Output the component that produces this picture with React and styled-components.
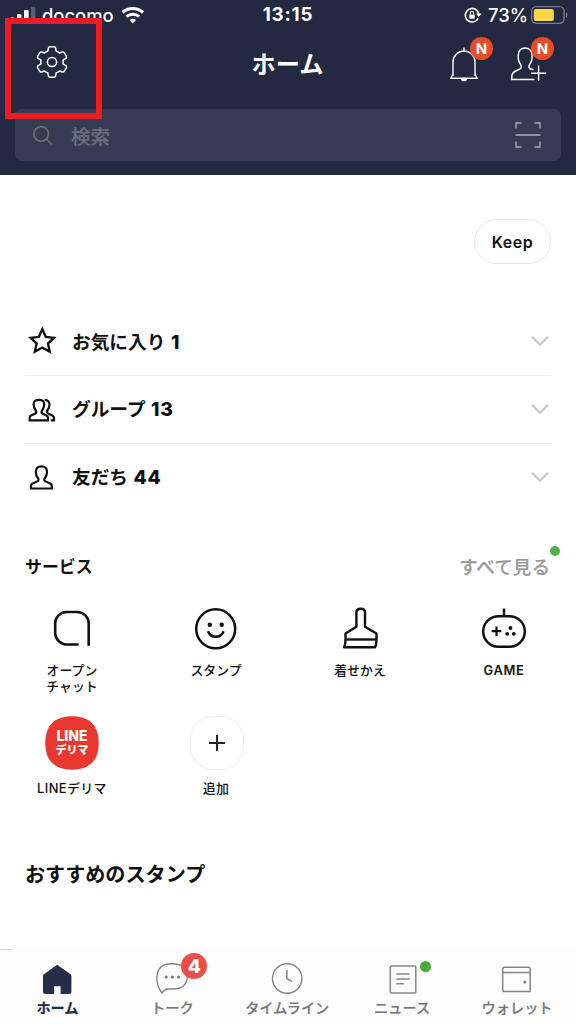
import React from "react";
import styled, { createGlobalStyle } from "styled-components";

const rows = [
  { label: "お気に入り", count: 1, icon: <StarIcon /> },
  { label: "グループ", count: 13, icon: <GroupIcon /> },
  { label: "友だち", count: 44, icon: <FriendIcon /> },
];

const services = [
  { label: "オープン\nチャット", icon: <OpenChatIcon /> },
  { label: "スタンプ", icon: <SmileIcon /> },
  { label: "着せかえ", icon: <BrushIcon /> },
  { label: "GAME", icon: <GameIcon />, latin: true },
  { label: "LINEデリマ", icon: <DelimaIcon />, tile: true },
  { label: "追加", icon: <AddIcon />, tile: true },
];

const tabs = [
  { label: "ホーム", icon: <HomeIcon />, active: true },
  { label: "トーク", icon: <TalkIcon />, badge: 4 },
  { label: "タイムライン", icon: <ClockIcon /> },
  { label: "ニュース", icon: <NewsIcon />, dot: true },
  { label: "ウォレット", icon: <WalletIcon /> },
];

export default function App() {
  return (
    <>
      <GlobalStyle />
      <Screen>
        <Header>
          <StatusBar>
            <StatusSide>
              <SignalIcon />
              <Carrier>docomo</Carrier>
              <WifiIcon />
            </StatusSide>
            <Clock>13:15</Clock>
            <StatusSide $end>
              <LockIcon />
              <Percent>73%</Percent>
              <BatteryIcon />
            </StatusSide>
          </StatusBar>
          <TitleBar>
            <GearIcon />
            <Title>ホーム</Title>
            <Actions>
              <Action>
                <BellIcon />
                <NewBadge>N</NewBadge>
              </Action>
              <Action>
                <AddFriendIcon />
                <NewBadge>N</NewBadge>
              </Action>
            </Actions>
          </TitleBar>
          <Search>
            <SearchIcon />
            <Placeholder>検索</Placeholder>
            <ScanIcon />
          </Search>
          <Highlight />
        </Header>

        <Content>
          <KeepRow>
            <Keep>Keep</Keep>
          </KeepRow>

          <List>
            {rows.map((row) => (
              <Row key={row.label}>
                <RowIcon>{row.icon}</RowIcon>
                <RowLabel>
                  {row.label} <Count>{row.count}</Count>
                </RowLabel>
                <ChevronIcon />
              </Row>
            ))}
          </List>

          <SectionHead>
            <SectionTitle>サービス</SectionTitle>
            <SeeAll>
              すべて見る
              <SeeAllDot />
            </SeeAll>
          </SectionHead>

          <Services>
            {services.map((s) => (
              <Service key={s.label}>
                <ServiceIcon>{s.icon}</ServiceIcon>
                <ServiceLabel $latin={s.latin} $tile={s.tile}>
                  {s.label}
                </ServiceLabel>
              </Service>
            ))}
          </Services>

          <Recommended>おすすめのスタンプ</Recommended>
          <Sliver />
        </Content>

        <TabBar>
          {tabs.map((tab) => (
            <Tab key={tab.label} $active={tab.active}>
              <TabIcon>
                {tab.icon}
                {tab.badge && <TabBadge>{tab.badge}</TabBadge>}
                {tab.dot && <TabDot />}
              </TabIcon>
              <TabLabel>{tab.label}</TabLabel>
            </Tab>
          ))}
        </TabBar>
      </Screen>
    </>
  );
}

/* status bar icons */

function SignalIcon() {
  return (
    <svg width="26" height="18" viewBox="0 0 26 18" fill="#fff">
      <rect x="0" y="11.5" width="4.4" height="5" rx="1" />
      <rect x="7" y="8.3" width="4.4" height="8.2" rx="1" />
      <rect x="14" y="4" width="4.6" height="12.5" rx="1" />
      <rect x="21" y="1" width="4.4" height="15.5" rx="1" opacity="0.25" />
    </svg>
  );
}

function WifiIcon() {
  return (
    <svg width="24" height="18" viewBox="0 0 24 18" fill="none" stroke="#fff">
      <path d="M1.6 6.5a15 15 0 0 1 20.4 0" strokeWidth="3.2" />
      <path d="M5.5 10.6a9.4 9.4 0 0 1 12.6 0" strokeWidth="3" />
      <path d="M11.8 17.5l-3.3-3.4a5 5 0 0 1 6.6 0z" fill="#fff" stroke="none" />
    </svg>
  );
}

function LockIcon() {
  return (
    <svg width="18" height="17" viewBox="0 0 18 17" fill="none" stroke="#fff">
      <path d="M14.2 11.3A6.8 6.8 0 1 1 12.6 3.1" strokeWidth="1.6" />
      <path d="M12.2 2.8a6.8 6.8 0 0 1 2.6 4" strokeWidth="1.6" />
      <path d="M12 6.5h5.6l-2.8 3.6z" fill="#fff" stroke="none" />
      <rect x="5.3" y="7.4" width="5.4" height="4.3" rx=".6" fill="#fff" stroke="none" />
      <path d="M6.4 7.6V6a1.6 1.6 0 0 1 3.2 0v1.6" strokeWidth="1.1" />
    </svg>
  );
}

function BatteryIcon() {
  return (
    <svg width="37" height="18" viewBox="0 0 37 18" fill="none">
      <rect x=".7" y=".7" width="32.4" height="16.6" rx="4.5" stroke="#7a7d8d" strokeWidth="1.3" />
      <rect x="2.8" y="2.9" width="20" height="12.2" rx="2.2" fill="#f9d648" />
      <path d="M35 6c1.8.7 1.8 5.3 0 6z" fill="#7a7d8d" />
    </svg>
  );
}

/* header icons */

function GearIcon() {
  return (
    <svg width="32" height="34" viewBox="-16 -17 32 34" fill="none" stroke="#fff" strokeWidth="1.5" strokeLinejoin="round">
      <path d="M-3.7 -13.5Q-3.5 -15.3 -2 -15.3H2Q3.5 -15.3 3.7 -13.5L4.1 -11Q6 -10.3 7.6 -9L10.2 -10Q11.5 -10.4 12.3 -9.2L14.3 -5.8Q14.9 -4.5 13.9 -3.6L11 -1.8Q11.4 0 11 1.8L13.9 3.6Q14.9 4.5 14.3 5.8L12.3 9.2Q11.5 10.4 10.2 10L7.6 9Q6 10.3 4.1 11L3.7 13.5Q3.5 15.3 2 15.3H-2Q-3.5 15.3 -3.7 13.5L-4.1 11Q-6 10.3 -7.6 9L-10.2 10Q-11.5 10.4 -12.3 9.2L-14.3 5.8Q-14.9 4.5 -13.9 3.6L-11 1.8Q-11.4 0 -11 -1.8L-13.9 -3.6Q-14.9 -4.5 -14.3 -5.8L-12.3 -9.2Q-11.5 -10.4 -10.2 -10L-7.6 -9Q-6 -10.3 -4.1 -11Z" />
      <circle r="4.6" />
    </svg>
  );
}

function BellIcon() {
  return (
    <svg width="36" height="36" viewBox="0 0 36 36" fill="none" stroke="#fff" strokeWidth="1.4">
      <path d="M14 .5v4M3 29V15a11 11 0 0 1 22 0v14M3 27L.8 31.2H27.2L25 27" />
      <path d="M11 31.7h6a3 2.6 0 0 1-6 0z" fill="#fff" stroke="none" />
    </svg>
  );
}

function AddFriendIcon() {
  return (
    <svg width="36" height="36" viewBox="0 0 36 36" fill="none" stroke="#fff" strokeWidth="1.4">
      <path d="M23.5 32.5H.8V29Q1.2 25.5 4.7 24L9.2 21.8Q11.2 20.4 9.8 17.9C7.5 14.8 6.9 12 7.3 8C7.7 3 10.2 1 14.1 1S20.6 3 21.1 8C21.4 12 20.7 14.8 18.4 17.9Q17.1 20.4 19.2 21.8L22.5 22.7" />
      <path d="M27.6 18.5v15.5M20.2 26.2h15" />
    </svg>
  );
}

function SearchIcon() {
  return (
    <svg width="20" height="20" viewBox="0 0 20 20" fill="none" stroke="#6b6f82" strokeWidth="1.6">
      <circle cx="8.2" cy="8.9" r="7.3" />
      <path d="M13.3 14L19 19.5" />
    </svg>
  );
}

function ScanIcon() {
  return (
    <svg width="26" height="26" viewBox="0 0 26 26" fill="none" stroke="#8b8e9c" strokeWidth="1.9">
      <path d="M1 6.5V1h5.5M19.5 1H25v5.5M25 19.5V25h-5.5M6.5 25H1v-5.5M.5 13h25" />
    </svg>
  );
}

/* list icons */

function StarIcon() {
  return (
    <svg width="30" height="30" viewBox="0 0 30 30" fill="none" stroke="#111" strokeWidth="2.4">
      <path d="M15.3 3.2L18.8 10.9L27 11.8L21 17.4L22.7 25.6L15.3 21.5L7.9 25.6L9.6 17.4L3.6 11.8L11.8 10.9Z" />
    </svg>
  );
}

function GroupIcon() {
  return (
    <svg width="30" height="30" viewBox="0 0 30 30" fill="none" stroke="#111" strokeWidth="2.2">
      <path d="M2.7 26.3H20.9V23.7Q20.9 22.2 19.5 21.5L15.4 19.5Q13.9 18.5 14.9 16.7Q17.2 13.8 17.2 10.5Q17.2 5.8 11.9 5.8T6.6 10.5Q6.6 13.8 8.9 16.7Q9.9 18.5 8.4 19.5L4.1 21.5Q2.7 22.2 2.7 23.7Z" />
      <path d="M17.7 5.8Q22.5 6.1 22.5 10.5Q22.5 13.8 20.2 16.7Q19.4 18.5 21 19.5L25.2 21.6Q27 22.5 27 24V26.3H23.7" />
    </svg>
  );
}

function FriendIcon() {
  return (
    <svg width="30" height="30" viewBox="0 0 30 30" fill="none" stroke="#111" strokeWidth="2.2">
      <path d="M4 26.5H24.8V23.9Q24.8 22.3 23.3 21.6L18.5 19.4Q16.5 18.2 17.8 16.2Q20 13.4 20 9.9Q20 4.3 14.4 4.3T8.8 9.9Q8.8 13.4 11 16.2Q12.3 18.2 10.3 19.4L5.5 21.6Q4 22.3 4 23.9Z" />
    </svg>
  );
}

function ChevronIcon() {
  return (
    <svg width="20" height="12" viewBox="0 0 20 12" fill="none" stroke="#c6c6c6" strokeWidth="2.2">
      <path d="M2 1.7l8 8 8-8" />
    </svg>
  );
}

/* service icons */

function OpenChatIcon() {
  return (
    <svg width="44" height="44" viewBox="0 0 44 44" fill="none" stroke="#111" strokeWidth="2.6">
      <path d="M28.7 37.5H17A12 12 0 0 1 5.2 27V16.5A11.5 11.5 0 0 1 16.5 5H27.3A11.5 11.5 0 0 1 38.7 16.5V38.8" />
    </svg>
  );
}

function SmileIcon() {
  return (
    <svg width="44" height="44" viewBox="0 0 44 44" fill="none" stroke="#111" strokeWidth="2.5">
      <circle cx="21.7" cy="21.8" r="19.5" />
      <circle cx="15.8" cy="17.8" r="2.2" fill="#111" stroke="none" />
      <circle cx="27.7" cy="17.8" r="2.2" fill="#111" stroke="none" />
      <path d="M14 24.3a8.3 8.3 0 0 0 15.6 0" />
    </svg>
  );
}

function BrushIcon() {
  return (
    <svg width="44" height="44" viewBox="0 0 44 44" fill="none" stroke="#111" strokeWidth="2.4" strokeLinejoin="round">
      <path d="M6 40.3H37Q38.5 38 38.5 33V26.5L27 19.7V5.5Q27 1.8 22.7 1.8T18.4 5.5V19.7L7.5 26.5V33Q7.5 38 6 40.3Z" />
      <path d="M7.5 32.5h31" />
    </svg>
  );
}

function GameIcon() {
  return (
    <svg width="46" height="44" viewBox="0 0 46 44" fill="none" stroke="#111" strokeWidth="2.5">
      <path d="M23 1.5v8" />
      <rect x="2.2" y="9.2" width="41.6" height="30.6" rx="15.3" />
      <path d="M15.5 19.5v9.5M10.7 24.2h9.6" strokeWidth="2.2" />
      <g fill="#111" stroke="none">
        <circle cx="29.5" cy="21" r="1.9" />
        <circle cx="26.2" cy="26.8" r="1.9" />
        <circle cx="32.8" cy="26.8" r="1.9" />
      </g>
    </svg>
  );
}

function DelimaIcon() {
  return (
    <Tile>
      <Squircle fill="#e8382f" />
      <TileText>
        <TileLine>LINE</TileLine>
        <TileLine $kana>デリマ</TileLine>
      </TileText>
    </Tile>
  );
}

function AddIcon() {
  return (
    <Tile $nudge>
      <Squircle fill="#fff" stroke="#ededed" />
      <TileText>
        <svg width="18" height="18" viewBox="0 0 18 18" stroke="#222" strokeWidth="2.1">
          <path d="M9 1v16M1 9h16" />
        </svg>
      </TileText>
    </Tile>
  );
}

function Squircle(props) {
  return (
    <svg width="54" height="54" viewBox="0 0 54 54" {...props}>
      <path d="M27 .3C44.5 .3 53.7 9.5 53.7 27S44.5 53.7 27 53.7S.3 44.5 .3 27S9.5 .3 27 .3Z" />
    </svg>
  );
}

/* tab icons */

function HomeIcon() {
  return (
    <svg width="34" height="34" viewBox="0 0 34 34" fill="#262d49">
      <path d="M17.2 1.8L30.5 11.2Q31.4 11.9 31.4 13V28.5Q31.4 31 28.9 31H20.6V23.2H14.1V31H5.5Q3 31 3 28.5V13Q3 11.9 3.9 11.2Z" />
    </svg>
  );
}

function TalkIcon() {
  return (
    <svg width="34" height="34" viewBox="0 0 34 34" fill="none" stroke="#858585" strokeWidth="1.4">
      <path d="M7 30Q1.9 23.3 1.9 15.5C1.9 5 7.3 .8 16.8 .8S32.3 4.7 32.3 13.2S26.8 25.7 18.3 26H12.8Q9.8 26.2 7 30Z" />
      <g fill="#777" stroke="none">
        <circle cx="11.2" cy="14" r="1.5" />
        <circle cx="17.4" cy="14" r="1.5" />
        <circle cx="23.5" cy="14" r="1.5" />
      </g>
    </svg>
  );
}

function ClockIcon() {
  return (
    <svg width="34" height="34" viewBox="0 0 34 34" fill="none" stroke="#858585" strokeWidth="1.4">
      <circle cx="17.2" cy="15.5" r="14.7" />
      <path d="M16.9 7V15.6L22 18.4" strokeWidth="1.5" />
    </svg>
  );
}

function NewsIcon() {
  return (
    <svg width="34" height="34" viewBox="0 0 34 34" fill="none" stroke="#858585" strokeWidth="1.5">
      <rect x="5.3" y="3" width="25.5" height="27" rx="1" />
      <path d="M11.3 11h13.3M11.3 16h13.3M11.3 20.8h7.5" />
    </svg>
  );
}

function WalletIcon() {
  return (
    <svg width="34" height="34" viewBox="0 0 34 34" fill="none" stroke="#858585" strokeWidth="1.5">
      <path d="M2.7 27V6.3Q2.7 4.2 4.9 4.2H28.5Q30.2 4.2 30.2 5.7V28.6H4.4Q2.7 28.6 2.7 27M2.7 9.4H30.2" />
      <circle cx="24.9" cy="19" r="1.5" fill="#777" stroke="none" />
    </svg>
  );
}

const GlobalStyle = createGlobalStyle`
  * {
    box-sizing: border-box;
  }
  body {
    margin: 0;
    background: #fff;
    font-family: Inter, "Noto Sans CJK JP", sans-serif;
    color: #111;
  }
  svg {
    display: block;
    flex-shrink: 0;
  }
`;

const Screen = styled.div`
  display: flex;
  flex-direction: column;
  width: 576px;
  height: 1024px;
  overflow: hidden;
`;

const Header = styled.header`
  position: relative;
  height: 175px;
  background: #242942;
  color: #fff;
`;

const StatusBar = styled.div`
  display: grid;
  grid-template-columns: 1fr auto 1fr;
  align-items: center;
  height: 32px;
  padding: 0 8px 2px 10px;
  line-height: 30px;
`;

const StatusSide = styled.div`
  display: flex;
  align-items: center;
  justify-content: ${(p) => (p.$end ? "flex-end" : "flex-start")};
`;

const Carrier = styled.span`
  margin: 0 7px 0 6px;
  font-size: 18.4px;
  font-weight: 500;
`;

const Clock = styled.span`
  margin-right: 2px;
  font-size: 18.8px;
  font-weight: 700;
  letter-spacing: 0.8px;
`;

const Percent = styled.span`
  margin: 0 3px 0 6px;
  font-size: 18.4px;
  font-weight: 500;
`;

const TitleBar = styled.div`
  display: grid;
  grid-template-columns: 1fr auto 1fr;
  align-items: center;
  height: 66px;
  padding: 0 25px 6px 36px;
`;

const Title = styled.h1`
  margin: 6px 0 0 -12px;
  font-size: 24.2px;
  line-height: 36px;
  font-weight: 700;
`;

const Actions = styled.div`
  display: flex;
  justify-content: flex-end;
  gap: 25px;
  padding-top: 6px;
  margin-right: 4px;
`;

const Action = styled.div`
  position: relative;
`;

const NewBadge = styled.span`
  position: absolute;
  top: -10px;
  left: 20px;
  width: 23px;
  height: 23px;
  border-radius: 50%;
  background: #e94a27;
  font-size: 15px;
  line-height: 23px;
  font-weight: 700;
  text-align: center;
`;

const Search = styled.div`
  display: flex;
  align-items: center;
  height: 52px;
  margin: 11px 15px 0;
  padding: 0 20px 0 18px;
  border-radius: 7px;
  background: #363a53;
`;

const Placeholder = styled.span`
  flex: 1;
  margin-left: 18px;
  padding-top: 3px;
  font-size: 19.5px;
  font-weight: 500;
  line-height: 30px;
  color: #6b6f82;
  -webkit-text-stroke: 0.2px #6b6f82;
`;

const Highlight = styled.div`
  position: absolute;
  top: 18px;
  left: 5px;
  width: 97px;
  height: 101px;
  border: 6px solid #ed1c24;
`;

const Content = styled.main`
  flex: 1;
  display: flex;
  flex-direction: column;
`;

const KeepRow = styled.div`
  display: flex;
  justify-content: flex-end;
  padding: 44px 25px 43px;
`;

const Keep = styled.button`
  width: 77px;
  height: 45px;
  padding: 0;
  border: 1px solid #e6e6e6;
  border-radius: 23px;
  background: #fff;
  color: #111;
  font-family: inherit;
  font-size: 16px;
  font-weight: 600;
  letter-spacing: 0.5px;
`;

const List = styled.div`
  margin: 0 25px;
`;

const Row = styled.div`
  display: flex;
  align-items: center;
  height: 68px;
  padding-right: 1px;
  & + & {
    padding-bottom: 2px;
    border-top: 1px solid #efefef;
  }
`;

const RowIcon = styled.div`
  margin-left: 2px;
`;

const RowLabel = styled.div`
  flex: 1;
  margin-left: 15px;
  padding-top: 2px;
  font-size: 18.7px;
  line-height: 28px;
  font-weight: 700;
`;

const Count = styled.span`
  margin-left: 1px;
  font-size: 19.2px;
  font-weight: 800;
  letter-spacing: 0.8px;
`;

const SectionHead = styled.div`
  display: flex;
  align-items: center;
  justify-content: space-between;
  height: 30px;
  margin: 39px 25px 0;
`;

const SectionTitle = styled.h2`
  margin: 0;
  font-size: 16.9px;
  font-weight: 700;
`;

const SeeAll = styled.span`
  position: relative;
  margin-right: 1px;
  font-size: 18.6px;
  font-weight: 500;
  color: #999;
  -webkit-text-stroke: 0.2px #999;
`;

const SeeAllDot = styled.span`
  position: absolute;
  top: -6px;
  right: -10px;
  width: 10px;
  height: 10px;
  border-radius: 50%;
  background: #4fb14a;
`;

const Services = styled.div`
  display: grid;
  grid-template-columns: repeat(4, 1fr);
  grid-template-rows: 114px 114px;
  margin-top: 22px;
`;

const Service = styled.div`
  display: flex;
  flex-direction: column;
  align-items: center;
`;

const ServiceIcon = styled.div`
  display: flex;
  align-items: center;
  justify-content: center;
  height: 54px;
`;

const ServiceLabel = styled.div`
  margin-top: ${(p) => (p.$tile ? 11 : 7)}px;
  font-size: 12.9px;
  line-height: 16px;
  font-weight: ${(p) => (p.$latin ? 600 : 500)};
  letter-spacing: ${(p) => (p.$latin ? 0.7 : p.$tile ? 0.4 : 0)}px;
  text-align: center;
  white-space: pre-line;
`;

const Tile = styled.div`
  display: grid;
  place-items: center;
  margin-left: ${(p) => (p.$nudge ? 2 : 0)}px;
  > * {
    grid-area: 1 / 1;
  }
`;

const TileText = styled.div`
  display: flex;
  flex-direction: column;
  align-items: center;
  color: #fff;
`;

const TileLine = styled.span`
  font-size: ${(p) => (p.$kana ? 11 : 14)}px;
  line-height: 15px;
  font-weight: ${(p) => (p.$kana ? 900 : 800)};
`;

const Recommended = styled.h2`
  margin: 30px 25px 0;
  font-size: 20.1px;
  line-height: 30px;
  font-weight: 700;
`;

const Sliver = styled.div`
  width: 12px;
  height: 1px;
  margin: auto 0 1px;
  background: #dcdcdc;
`;

const TabBar = styled.nav`
  display: grid;
  grid-template-columns: repeat(5, 1fr);
  height: 73px;
  padding: 12px 1.5px 0 0;
  background: #fcfcfc;
`;

const Tab = styled.div`
  display: flex;
  flex-direction: column;
  align-items: center;
  color: ${(p) => (p.$active ? "#262d49" : "#777")};
  font-weight: ${(p) => (p.$active ? 700 : 500)};
`;

const TabIcon = styled.div`
  position: relative;
`;

const TabLabel = styled.span`
  font-size: 14.2px;
  line-height: 22px;
  -webkit-text-stroke: 0.2px currentColor;
`;

const TabBadge = styled.span`
  position: absolute;
  top: -10px;
  left: 26px;
  width: 26px;
  height: 26px;
  border-radius: 50%;
  background: #eb4d4b;
  color: #fff;
  font-size: 19px;
  line-height: 27px;
  font-weight: 800;
  text-align: center;
`;

const TabDot = styled.span`
  position: absolute;
  top: -2px;
  left: 35px;
  width: 11px;
  height: 11px;
  border-radius: 50%;
  background: #4bae33;
`;
